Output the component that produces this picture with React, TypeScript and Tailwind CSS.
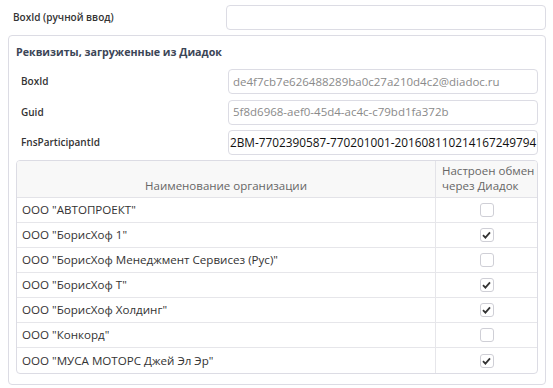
import React from "react";

const orgs: { name: string; on: boolean }[] = [
  { name: 'ООО "АВТОПРОЕКТ"', on: false },
  { name: 'ООО "БорисХоф 1"', on: true },
  { name: 'ООО "БорисХоф Менеджмент Сервисез (Рус)"', on: false },
  { name: 'ООО "БорисХоф Т"', on: true },
  { name: 'ООО "БорисХоф Холдинг"', on: true },
  { name: 'ООО "Конкорд"', on: false },
  { name: 'ООО "МУСА МОТОРС Джей Эл Эр"', on: true },
];

function Check({ on }: { on: boolean }) {
  return (
    <span className="flex h-[14px] w-[14px] items-center justify-center rounded-[3px] border border-[#cfcfd6] bg-white">
      {on && (
        <svg width="9" height="8" viewBox="0 0 9 8">
          <path d="M1 4.2 L3.4 6.6 L8 1.4" fill="none" stroke="#333" strokeWidth="1.8" />
        </svg>
      )}
    </span>
  );
}

function Field({ label, value, dark }: { label: string; value: string; dark?: boolean }) {
  return (
    <div className="flex h-[25px] items-center">
      <div className="w-[212px] pl-[5px] text-[10px] font-semibold text-[#333]">{label}</div>
      <div
        className={`flex h-[25px] w-[310px] items-center overflow-hidden whitespace-nowrap rounded-[4px] border border-[#dcdce4] bg-white ${
          dark ? "pl-[1px] text-[11.8px] text-[#111]" : "pl-[4px] text-[11.5px] text-[#8a8a8a]"
        }`}
      >
        {value}
      </div>
    </div>
  );
}

export default function App() {
  return (
    <div className="h-[388px] w-[553px] bg-white" style={{ fontFamily: '"Open Sans", sans-serif' }}>
      <div className="flex h-[35px] items-start pt-[5px]">
        <div className="flex h-[24px] w-[226px] items-center pl-[13px] text-[10px] font-semibold text-[#333]">
          BoxId (ручной ввод)
        </div>
        <div className="h-[25px] w-[320px] rounded-[4px] border border-[#dcdce4] bg-white" />
      </div>

      <div className="ml-[8px] h-[350px] w-[538px] rounded-[4px] border border-[#dcdce4] px-[7px] pt-[8px]">
        <div className="text-[10.7px] font-bold text-[#3b4556]">Реквизиты, загруженные из Диадок</div>
        <div className="mt-[9px] flex flex-col gap-[5.5px]">
          <Field label="BoxId" value="de4f7cb7e626488289ba0c27a210d4c2@diadoc.ru" />
          <Field label="Guid" value="5f8d6968-aef0-45d4-ac4c-c79bd1fa372b" />
          <Field label="FnsParticipantId" value="2BM-7702390587-770201001-201608110214167249794" dark />
        </div>

        <div className="mt-[5px] w-[522px] overflow-hidden rounded-[4px] border border-[#dcdce4]">
          <div className="flex h-[37px] border-b border-[#e3e3e8] bg-[#f8f8f8] text-[11.5px] text-[#666]">
            <div className="flex w-[419px] items-end justify-center border-r border-[#e3e3e8] pb-[3px]">
              Наименование организации
            </div>
            <div className="flex-1 whitespace-nowrap pl-[6px] pt-[2px] leading-[15px]">
              Настроен обмен
              <br />
              через Диадок
            </div>
          </div>
          {orgs.map((o, i) => (
            <div
              key={i}
              className={`flex h-[25px] text-[11.6px] text-[#333] ${i < orgs.length - 1 ? "border-b border-[#e6e6ea]" : ""}`}
            >
              <div className="flex w-[419px] items-center border-r border-[#e6e6ea] pl-[5px]">{o.name}</div>
              <div className="flex flex-1 items-center justify-center">
                <Check on={o.on} />
              </div>
            </div>
          ))}
        </div>
      </div>
    </div>
  );
}
